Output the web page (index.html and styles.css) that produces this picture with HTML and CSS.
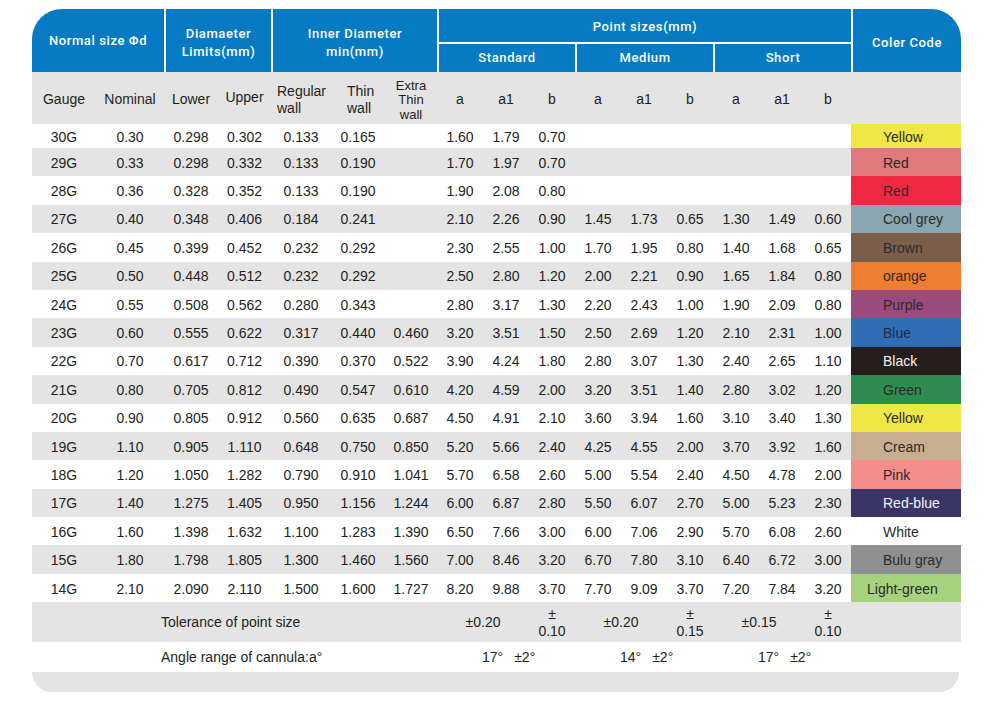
FILE: index.html
```html
<!DOCTYPE html>
<html lang="en">
<head>
<meta charset="utf-8">
<title>Needle gauge table</title>
<link rel="stylesheet" href="styles.css">
</head>
<body>
<div class="sheet">
  <div class="head">
    <div class="hc c-ns">Normal size Φd</div>
    <div class="hc sep c-dl">Diamaeter<br>Limits(mm)</div>
    <div class="hc sep c-id">Inner Diameter<br>min(mm)</div>
    <div class="hc sep c-ps">Point sizes(mm)</div>
    <div class="hc sep sub c-st">Standard</div>
    <div class="hc sep sub c-md">Medium</div>
    <div class="hc sep sub c-sh">Short</div>
    <div class="hc sep c-cc">Coler Code</div>
  </div>
  <div class="subhead">
    <div class="c">Gauge</div>
    <div class="c">Nominal</div>
    <div class="c">Lower</div>
    <div class="c up">Upper</div>
    <div class="c two reg">Regular<br>wall</div>
    <div class="c two thin">Thin<br>wall</div>
    <div class="c three">Extra<br>Thin<br>wall</div>
    <div class="c">a</div><div class="c">a1</div><div class="c">b</div>
    <div class="c">a</div><div class="c">a1</div><div class="c">b</div>
    <div class="c">a</div><div class="c">a1</div><div class="c">b</div>
    <div class="c"></div>
  </div>
  <div class="rows">
    <div class="row first"><div class="c">30G</div><div class="c">0.30</div><div class="c">0.298</div><div class="c">0.302</div><div class="c">0.133</div><div class="c">0.165</div><div class="c"></div><div class="c">1.60</div><div class="c">1.79</div><div class="c">0.70</div><div class="c"></div><div class="c"></div><div class="c"></div><div class="c"></div><div class="c"></div><div class="c"></div><div class="c sw yellow">Yellow</div></div>
    <div class="row alt"><div class="c">29G</div><div class="c">0.33</div><div class="c">0.298</div><div class="c">0.332</div><div class="c">0.133</div><div class="c">0.190</div><div class="c"></div><div class="c">1.70</div><div class="c">1.97</div><div class="c">0.70</div><div class="c"></div><div class="c"></div><div class="c"></div><div class="c"></div><div class="c"></div><div class="c"></div><div class="c sw red1">Red</div></div>
    <div class="row"><div class="c">28G</div><div class="c">0.36</div><div class="c">0.328</div><div class="c">0.352</div><div class="c">0.133</div><div class="c">0.190</div><div class="c"></div><div class="c">1.90</div><div class="c">2.08</div><div class="c">0.80</div><div class="c"></div><div class="c"></div><div class="c"></div><div class="c"></div><div class="c"></div><div class="c"></div><div class="c sw red2">Red</div></div>
    <div class="row alt"><div class="c">27G</div><div class="c">0.40</div><div class="c">0.348</div><div class="c">0.406</div><div class="c">0.184</div><div class="c">0.241</div><div class="c"></div><div class="c">2.10</div><div class="c">2.26</div><div class="c">0.90</div><div class="c">1.45</div><div class="c">1.73</div><div class="c">0.65</div><div class="c">1.30</div><div class="c">1.49</div><div class="c">0.60</div><div class="c sw coolgrey">Cool grey</div></div>
    <div class="row"><div class="c">26G</div><div class="c">0.45</div><div class="c">0.399</div><div class="c">0.452</div><div class="c">0.232</div><div class="c">0.292</div><div class="c"></div><div class="c">2.30</div><div class="c">2.55</div><div class="c">1.00</div><div class="c">1.70</div><div class="c">1.95</div><div class="c">0.80</div><div class="c">1.40</div><div class="c">1.68</div><div class="c">0.65</div><div class="c sw brown">Brown</div></div>
    <div class="row alt"><div class="c">25G</div><div class="c">0.50</div><div class="c">0.448</div><div class="c">0.512</div><div class="c">0.232</div><div class="c">0.292</div><div class="c"></div><div class="c">2.50</div><div class="c">2.80</div><div class="c">1.20</div><div class="c">2.00</div><div class="c">2.21</div><div class="c">0.90</div><div class="c">1.65</div><div class="c">1.84</div><div class="c">0.80</div><div class="c sw orange">orange</div></div>
    <div class="row"><div class="c">24G</div><div class="c">0.55</div><div class="c">0.508</div><div class="c">0.562</div><div class="c">0.280</div><div class="c">0.343</div><div class="c"></div><div class="c">2.80</div><div class="c">3.17</div><div class="c">1.30</div><div class="c">2.20</div><div class="c">2.43</div><div class="c">1.00</div><div class="c">1.90</div><div class="c">2.09</div><div class="c">0.80</div><div class="c sw purple">Purple</div></div>
    <div class="row alt"><div class="c">23G</div><div class="c">0.60</div><div class="c">0.555</div><div class="c">0.622</div><div class="c">0.317</div><div class="c">0.440</div><div class="c">0.460</div><div class="c">3.20</div><div class="c">3.51</div><div class="c">1.50</div><div class="c">2.50</div><div class="c">2.69</div><div class="c">1.20</div><div class="c">2.10</div><div class="c">2.31</div><div class="c">1.00</div><div class="c sw blue">Blue</div></div>
    <div class="row"><div class="c">22G</div><div class="c">0.70</div><div class="c">0.617</div><div class="c">0.712</div><div class="c">0.390</div><div class="c">0.370</div><div class="c">0.522</div><div class="c">3.90</div><div class="c">4.24</div><div class="c">1.80</div><div class="c">2.80</div><div class="c">3.07</div><div class="c">1.30</div><div class="c">2.40</div><div class="c">2.65</div><div class="c">1.10</div><div class="c sw black">Black</div></div>
    <div class="row alt"><div class="c">21G</div><div class="c">0.80</div><div class="c">0.705</div><div class="c">0.812</div><div class="c">0.490</div><div class="c">0.547</div><div class="c">0.610</div><div class="c">4.20</div><div class="c">4.59</div><div class="c">2.00</div><div class="c">3.20</div><div class="c">3.51</div><div class="c">1.40</div><div class="c">2.80</div><div class="c">3.02</div><div class="c">1.20</div><div class="c sw green">Green</div></div>
    <div class="row"><div class="c">20G</div><div class="c">0.90</div><div class="c">0.805</div><div class="c">0.912</div><div class="c">0.560</div><div class="c">0.635</div><div class="c">0.687</div><div class="c">4.50</div><div class="c">4.91</div><div class="c">2.10</div><div class="c">3.60</div><div class="c">3.94</div><div class="c">1.60</div><div class="c">3.10</div><div class="c">3.40</div><div class="c">1.30</div><div class="c sw yellow">Yellow</div></div>
    <div class="row alt"><div class="c">19G</div><div class="c">1.10</div><div class="c">0.905</div><div class="c">1.110</div><div class="c">0.648</div><div class="c">0.750</div><div class="c">0.850</div><div class="c">5.20</div><div class="c">5.66</div><div class="c">2.40</div><div class="c">4.25</div><div class="c">4.55</div><div class="c">2.00</div><div class="c">3.70</div><div class="c">3.92</div><div class="c">1.60</div><div class="c sw cream">Cream</div></div>
    <div class="row"><div class="c">18G</div><div class="c">1.20</div><div class="c">1.050</div><div class="c">1.282</div><div class="c">0.790</div><div class="c">0.910</div><div class="c">1.041</div><div class="c">5.70</div><div class="c">6.58</div><div class="c">2.60</div><div class="c">5.00</div><div class="c">5.54</div><div class="c">2.40</div><div class="c">4.50</div><div class="c">4.78</div><div class="c">2.00</div><div class="c sw pink">Pink</div></div>
    <div class="row alt"><div class="c">17G</div><div class="c">1.40</div><div class="c">1.275</div><div class="c">1.405</div><div class="c">0.950</div><div class="c">1.156</div><div class="c">1.244</div><div class="c">6.00</div><div class="c">6.87</div><div class="c">2.80</div><div class="c">5.50</div><div class="c">6.07</div><div class="c">2.70</div><div class="c">5.00</div><div class="c">5.23</div><div class="c">2.30</div><div class="c sw redblue">Red-blue</div></div>
    <div class="row"><div class="c">16G</div><div class="c">1.60</div><div class="c">1.398</div><div class="c">1.632</div><div class="c">1.100</div><div class="c">1.283</div><div class="c">1.390</div><div class="c">6.50</div><div class="c">7.66</div><div class="c">3.00</div><div class="c">6.00</div><div class="c">7.06</div><div class="c">2.90</div><div class="c">5.70</div><div class="c">6.08</div><div class="c">2.60</div><div class="c sw white">White</div></div>
    <div class="row alt"><div class="c">15G</div><div class="c">1.80</div><div class="c">1.798</div><div class="c">1.805</div><div class="c">1.300</div><div class="c">1.460</div><div class="c">1.560</div><div class="c">7.00</div><div class="c">8.46</div><div class="c">3.20</div><div class="c">6.70</div><div class="c">7.80</div><div class="c">3.10</div><div class="c">6.40</div><div class="c">6.72</div><div class="c">3.00</div><div class="c sw bulugray">Bulu gray</div></div>
    <div class="row"><div class="c">14G</div><div class="c">2.10</div><div class="c">2.090</div><div class="c">2.110</div><div class="c">1.500</div><div class="c">1.600</div><div class="c">1.727</div><div class="c">8.20</div><div class="c">9.88</div><div class="c">3.70</div><div class="c">7.70</div><div class="c">9.09</div><div class="c">3.70</div><div class="c">7.20</div><div class="c">7.84</div><div class="c">3.20</div><div class="c sw lightgreen">Light-green</div></div>
  </div>
  <div class="tol">
    <div class="c label">Tolerance of point size</div>
    <div class="c span2">±0.20</div>
    <div class="c stack">±<br>0.10</div>
    <div class="c span2">±0.20</div>
    <div class="c stack">±<br>0.15</div>
    <div class="c span2">±0.15</div>
    <div class="c stack">±<br>0.10</div>
  </div>
  <div class="ang">
    <div class="c label">Angle range of cannula:a°</div>
    <div class="c grp"><span>17°</span><span>±2°</span></div>
    <div class="c grp"><span>14°</span><span>±2°</span></div>
    <div class="c grp"><span>17°</span><span>±2°</span></div>
  </div>
  <div class="foot"></div>
</div>
</body>
</html>
```
FILE: styles.css
```css
:root {
  --cols: 64px 68px 54px 53px 60px 54px 52px repeat(9, 46px) 110px;
  --blue: #067bc3;
  --gray: #e4e4e4;
}

html, body {
  margin: 0;
  background: #fff;
}

body {
  font-family: "Liberation Sans", Arial, sans-serif;
  font-size: 14px;
  color: #231f20;
}

.sheet {
  width: 929px;
  margin: 9px 0 0 32px;
}

/* blue header */
.head {
  display: grid;
  grid-template-columns: var(--cols);
  grid-template-rows: 33px 30px;
  background: var(--blue);
  border-radius: 30px 30px 0 0;
  overflow: hidden;
  color: #fff;
  font-family: Roboto, "DejaVu Sans", sans-serif;
  font-weight: 500;
  font-size: 13px;
  letter-spacing: 0.6px;
}

.hc {
  display: flex;
  align-items: center;
  justify-content: center;
  text-align: center;
  line-height: 18px;
  box-sizing: border-box;
}

.hc.sep { border-left: 2px solid #fff; }
.hc.sub { border-top: 2px solid #fff; }

.c-ns { grid-column: 1 / 3; grid-row: 1 / 3; padding-top: 1px; }
.c-dl { grid-column: 3 / 5; grid-row: 1 / 3; padding-top: 4px; }
.c-id { grid-column: 5 / 8; grid-row: 1 / 3; padding-top: 4px; }
.c-ps { grid-column: 8 / 17; grid-row: 1; padding-top: 2px; }
.c-st { grid-column: 8 / 11; grid-row: 2; }
.c-md { grid-column: 11 / 14; grid-row: 2; }
.c-sh { grid-column: 14 / 17; grid-row: 2; }
.c-cc { grid-column: 17; grid-row: 1 / 3; padding-top: 4px; }

/* generic cell */
.c {
  display: flex;
  align-items: center;
  justify-content: center;
  text-align: center;
  white-space: nowrap;
}

/* gray sub header */
.subhead {
  display: grid;
  grid-template-columns: var(--cols);
  height: 52px;
  background: var(--gray);
  padding-top: 2px;
  box-sizing: border-box;
}

.subhead .up { padding-bottom: 4px; }
.subhead .two {
  justify-content: flex-start;
  text-align: left;
  line-height: 17px;
  padding-top: 2px;
}
.subhead .reg { padding-left: 6px; }
.subhead .thin { padding-left: 16px; }
.subhead .three {
  font-size: 13px;
  line-height: 14.5px;
  padding-top: 3px;
}

/* body rows */
.row {
  display: grid;
  grid-template-columns: var(--cols);
  height: 28.4px;
  background: #fff;
}
.row.first { height: 24px; }
.row.alt { background: var(--gray); }
.row .c { padding-top: 1px; }

.sw {
  justify-content: flex-start;
  padding-left: 32px;
  color: #2b2b2b;
}

.yellow { background: #eee746; }
.red1 { background: #de797c; }
.red2 { background: #ef2944; }
.coolgrey { background: #89a6b2; }
.brown { background: #7b5e4a; }
.orange { background: #ed7e2f; }
.purple { background: #9a4b7b; }
.blue { background: #2f6db5; color: #1d2a4a; }
.black { background: #241f1c; color: #f2f2f2; }
.green { background: #2f8c50; }
.cream { background: #c7ae90; }
.pink { background: #f38e8d; }
.redblue { background: #3b3567; color: #f2f2f2; }
.white { background: transparent; }
.bulugray { background: #8f8e91; }
.lightgreen { background: #a7d27d; padding-left: 16px; }

/* tolerance row */
.tol {
  display: grid;
  grid-template-columns: var(--cols);
  height: 40px;
  background: var(--gray);
}

.label {
  grid-column: 1 / 8;
  justify-content: flex-start;
  padding-left: 129px;
}

.span2 { grid-column: span 2; }

.stack {
  white-space: normal;
  line-height: 17px;
  padding-top: 2px;
}

/* angle row */
.ang {
  display: grid;
  grid-template-columns: var(--cols);
  height: 30px;
  background: #fff;
}

.grp {
  grid-column: span 3;
  justify-content: flex-start;
  padding-left: 45px;
  gap: 11px;
}

.foot {
  width: 927px;
  height: 20px;
  background: var(--gray);
  border-radius: 0 0 28px 28px;
}
```
